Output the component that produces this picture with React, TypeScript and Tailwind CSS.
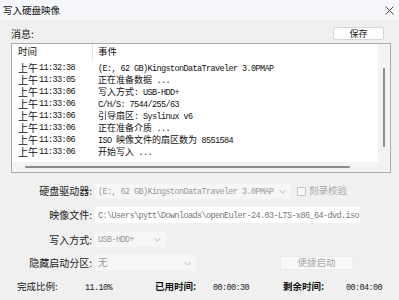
import React from "react";

const SANS = "font-['Noto_Sans_CJK_SC','Noto_Sans',sans-serif]";

function Mixed({ text, mono = "text-[#111]", cjk = "text-[#111]" }: { text: string; mono?: string; cjk?: string }) {
  const parts = text.match(/[\x00-\x7f]+|[^\x00-\x7f]+/g) || [];
  return (
    <span className="whitespace-pre text-[9px] leading-none">
      {parts.map((p, i) =>
        /^[\x00-\x7f]/.test(p) ? (
          <span key={i} className={`font-['Liberation_Mono',monospace] text-[8.5px] tracking-[-0.6px] ${mono}`}>
            {p}
          </span>
        ) : (
          <span key={i} className={`font-['Noto_Sans_CJK_SC',sans-serif] text-[9px] ${cjk}`}>
            {p}
          </span>
        )
      )}
    </span>
  );
}

const rows: [string, string][] = [
  ["11:32:38", "(E:, 62 GB)KingstonDataTraveler 3.0PMAP"],
  ["11:33:05", "正在准备数据 ..."],
  ["11:33:06", "写入方式: USB-HDD+"],
  ["11:33:06", "C/H/S: 7544/255/63"],
  ["11:33:06", "引导扇区: Syslinux v6"],
  ["11:33:06", "正在准备介质 ..."],
  ["11:33:06", "ISO 映像文件的扇区数为 8551584"],
  ["11:33:06", "开始写入 ..."],
];

function Chevron() {
  return (
    <svg width="7" height="5" viewBox="0 0 7 5" className="shrink-0">
      <path d="M0.5 1 L3.5 4 L6.5 1" fill="none" stroke="#b0b0b0" strokeWidth="0.9" />
    </svg>
  );
}

function Label({ children }: { children: React.ReactNode }) {
  return <div className={`text-right text-[10px] leading-none text-[#222] ${SANS}`}>{children}</div>;
}

export default function App() {
  return (
    <div className={`w-[399px] h-[300px] bg-[#f0f0f0] flex flex-col overflow-hidden ${SANS}`}>
      {/* title bar */}
      <div className="h-[20px] shrink-0 bg-[#f5f7fa] flex items-center justify-between pl-[3px] pr-[5px]">
        <span className="text-[9.5px] text-[#111] leading-none mt-[1px]">写入硬盘映像</span>
        <svg width="9" height="9" viewBox="0 0 9 9">
          <path d="M0.5 0.5 L8.5 8.5 M8.5 0.5 L0.5 8.5" stroke="#333" strokeWidth="0.9" />
        </svg>
      </div>

      <div className="flex flex-col pl-[11px] pr-[8px]">
        {/* message row */}
        <div className="h-[23px] flex items-end justify-between pr-[7px]">
          <span className="text-[10px] leading-none text-[#222] mb-[4px]">消息:</span>
          <div className="w-[51px] h-[13px] mb-[3px] bg-[#fdfdfd] border border-[#d6d6d6] rounded-[2px] flex items-center justify-center text-[9px] leading-none text-[#222]">
            保存
          </div>
        </div>

        {/* list box */}
        <div className="w-[380px] h-[130px] border border-[#ababab] flex flex-col">
          <div className="flex h-[118px]">
            <div className="flex-1 bg-white flex flex-col">
              <div className="h-[16px] flex items-center">
                <div className="w-[81px] h-full border-r border-[#e5e5e5] pl-[6px] flex items-center text-[9.5px] leading-none text-[#111]">
                  时间
                </div>
                <div className="pl-[5px] text-[9.5px] leading-none text-[#111]">事件</div>
              </div>
              <div className="mt-[2px] flex flex-col">
                {rows.map(([t, e], i) => (
                  <div key={i} className="h-[12px] flex items-center leading-none">
                    <div className="w-[86px] pl-[6px] flex items-center shrink-0">
                      <span className="inline-block text-[10px] leading-none text-[#111] w-[21px]">上午</span>
                      <span className="font-['Liberation_Mono',monospace] text-[8.5px] leading-none tracking-[-0.6px] text-[#111]">{t}</span>
                    </div>
                    <Mixed text={e} />
                  </div>
                ))}
              </div>
            </div>
            <div className="w-[12px] bg-[#f3f3f3] flex justify-center">
              <div className="mt-[24px] h-[79px] w-[2px] bg-[#8a8a8a] rounded-full" />
            </div>
          </div>
          <div className="h-[10px] bg-[#f3f3f3]">
            <div className="ml-[13px] mt-[4px] w-[325px] h-[2px] bg-[#8a8a8a] rounded-full" />
          </div>
        </div>

        {/* form */}
        <div className="mt-[10px] grid grid-cols-[81px_3px_196px_6px_9px_3px_60px] grid-rows-[16px_8px_16px_9px_15px_8px_16px] items-center">
          {/* row 1 */}
          <Label>硬盘驱动器:</Label>
          <div />
          <div className="h-[15px] overflow-hidden bg-[#f6f6f6] flex items-center justify-between pl-[3px] pr-[5px]">
            <Mixed text="(E:, 62 GB)KingstonDataTraveler 3.0PMAP" mono="text-[#9a9a9a]" />
            <Chevron />
          </div>
          <div />
          <div className="w-[9px] h-[9px] border border-[#c8c8c8] bg-[#f8f8f8] rounded-[1px]" />
          <div />
          <span className="text-[9.5px] leading-none text-[#a8a8a8] whitespace-nowrap">刻录校验</span>

          <div className="col-span-7" />

          {/* row 2 */}
          <Label>映像文件:</Label>
          <div />
          <div className="col-span-5 w-[265px] h-[16px] overflow-hidden bg-white flex items-center pl-[3px]">
            <Mixed text="C:\Users\pytt\Downloads\openEuler-24.03-LTS-x86_64-dvd.iso" mono="text-[#777]" />
          </div>

          <div className="col-span-7" />

          {/* row 3 */}
          <Label>写入方式:</Label>
          <div />
          <div className="col-span-5 w-[71px] h-[15px] bg-[#f6f6f6] flex items-center justify-between pl-[3px] pr-[5px]">
            <Mixed text="USB-HDD+" mono="text-[#9a9a9a]" />
            <Chevron />
          </div>

          <div className="col-span-7" />

          {/* row 4 */}
          <Label>隐藏启动分区:</Label>
          <div />
          <div className="col-span-5 flex items-center">
            <div className="w-[101px] h-[16px] shrink-0 bg-[#f6f6f6] flex items-center justify-between pl-[3px] pr-[5px]">
              <span className="text-[9.5px] leading-none text-[#9a9a9a]">无</span>
              <Chevron />
            </div>
            <div className="ml-[84px] w-[73px] shrink-0 h-[14px] bg-[#f8f8f8] border border-[#ececec] flex items-center justify-center text-[9.5px] leading-none text-[#a8a8a8]">
              便捷启动
            </div>
          </div>
        </div>

        <div className="mt-[9px] h-[14px] grid grid-cols-[68px_70px_58px_70px_63px_auto] items-center pl-[6px] leading-none">
          <span className="text-[9.5px] text-[#222]">完成比例:</span>
          <Mixed text="11.10%" mono="text-[#222]" />
          <span className="text-[9.5px] text-[#111] font-semibold">已用时间:</span>
          <Mixed text="00:00:30" mono="text-[#222]" />
          <span className="text-[9.5px] text-[#111] font-semibold">剩余时间:</span>
          <Mixed text="00:04:00" mono="text-[#222]" />
        </div>
      </div>
    </div>
  );
}
